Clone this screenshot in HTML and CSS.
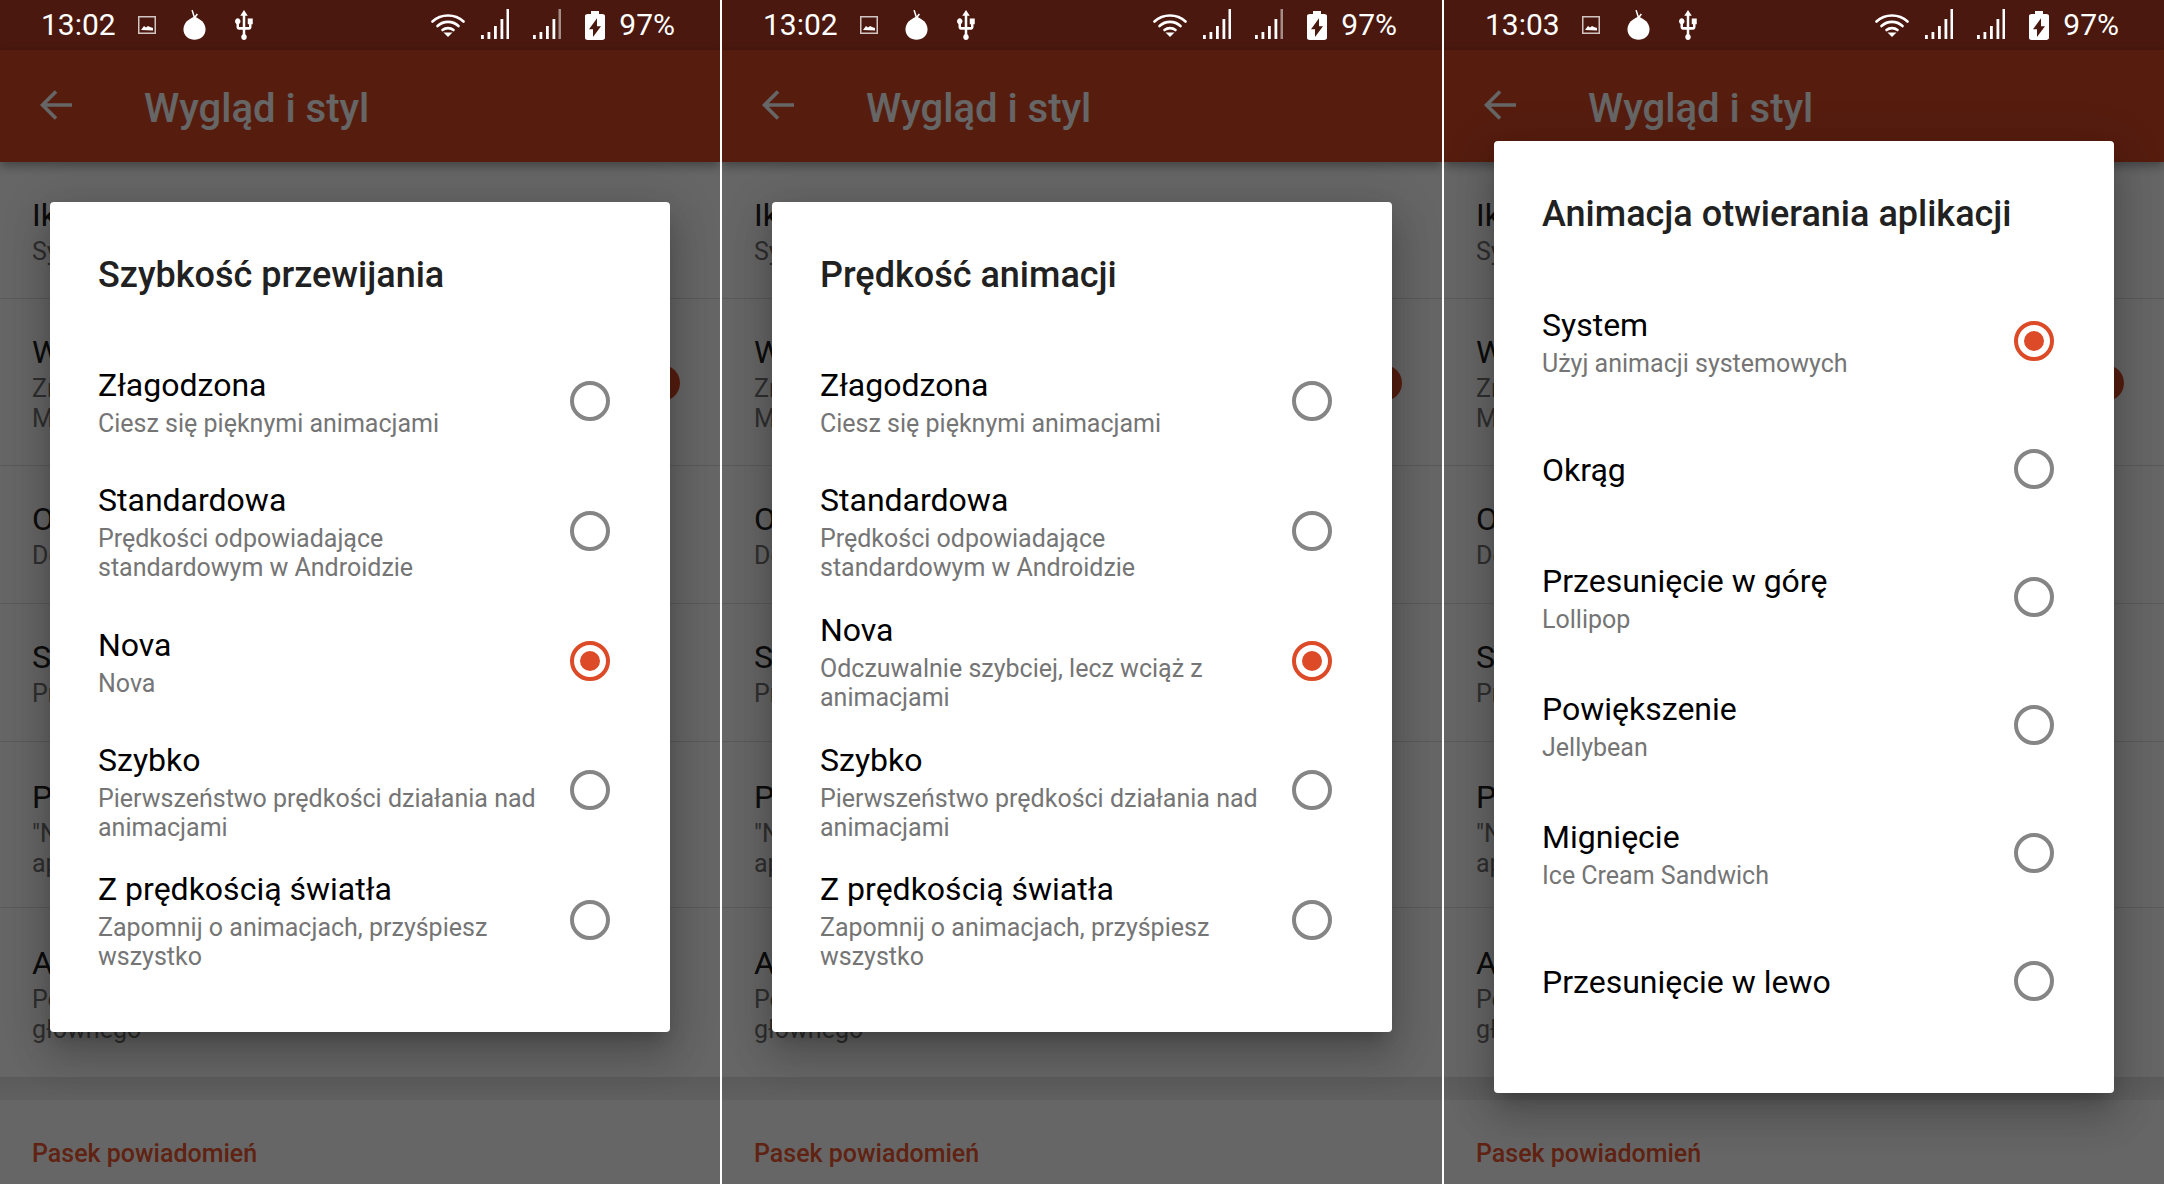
FILE: index.html
```html
<!DOCTYPE html>
<html lang="pl">
<head>
  <meta charset="UTF-8" />
  <title>Wygląd i styl</title>
  <link rel="stylesheet" href="styles.css">
</head>
<body>
  <svg class="defs" width="0" height="0">
    <symbol id="i-image" viewBox="0 0 18 18">
      <path d="M.75.75h16.5v16.5H.75z" fill="none" stroke="#fff" stroke-opacity=".75" stroke-width="1.5"/>
      <path d="M3 14l3-4 2 1.500 2-1.500 2 1 3 1v2.500z" fill="#fff"/>
    </symbol>
    <symbol id="i-bomb" viewBox="0 0 24 32">
      <path d="M12 8C6 10 .5 14.500 .5 21 .5 28 6 32 12 32s11.500-4 11.500-11C23.500 14.500 18 10 12 8z" fill="#fff"/>
      <path d="M12 9L9.500 1M12 9l3-4" fill="none" stroke="#fff" stroke-width="1.600"/>
    </symbol>
    <symbol id="i-usb" viewBox="4 1 16 21.200" preserveAspectRatio="none">
      <path fill="#fff" d="M15 7v4h1v2h-3V5h2l-3-4-3 4h2v8H8v-2.070c.7-.37 1.200-1.080 1.200-1.930 0-1.210-.99-2.200-2.200-2.200-1.210 0-2.200.99-2.200 2.200 0 .85.5 1.560 1.200 1.930V13c0 1.110.89 2 2 2h3v3.050c-.71.37-1.200 1.100-1.200 1.950 0 1.220.99 2.200 2.200 2.200 1.210 0 2.200-.98 2.200-2.200 0-.85-.49-1.580-1.200-1.950V15h3c1.110 0 2-.89 2-2v-2h1V7h-4z"/>
    </symbol>
    <symbol id="i-wifi" viewBox="0 0 34 24">
      <g fill="none" stroke="#fff" stroke-width="2.600" stroke-linecap="round">
        <path d="M1.500 8.500C10 .500 24 .500 32.500 8.500"/>
        <path d="M6.500 13C12.500 7.500 21.500 7.500 27.500 13"/>
        <path d="M11.500 17C14.500 14.500 19.500 14.500 22.500 17"/>
      </g>
      <path d="M12.500 19.500h9L17 24z" fill="#fff"/>
    </symbol>
    <symbol id="i-signal" viewBox="0 0 28 30">
      <path fill="#fff" d="M0 26h2.800v4H0zM6.500 23h2.800v7H6.500zM13 17h2.800v13H13zM19.500 10h2.800v20h-2.800z"/>
      <path fill="#fff" d="M25.500 0h2.500v30h-2.500z"/>
    </symbol>
    <symbol id="i-signal-dim" viewBox="0 0 28 30">
      <path fill="#fff" d="M0 26h2.800v4H0zM6.500 23h2.800v7H6.500zM13 17h2.800v13H13zM19.500 10h2.800v20h-2.800z"/>
      <path fill="#fff" fill-opacity=".5" d="M25.500 0h2.500v30h-2.500z"/>
    </symbol>
    <symbol id="i-battery" viewBox="7 2 10 20" preserveAspectRatio="none">
      <path fill="#fff" d="M15.670 4H14V2h-4v2H8.330C7.600 4 7 4.600 7 5.330v15.330C7 21.400 7.600 22 8.330 22h7.330c.74 0 1.340-.6 1.340-1.330V5.330C17 4.600 16.400 4 15.670 4zM11 20v-5.500H9L13 7v5.500h2L11 20z"/>
    </symbol>
    <symbol id="i-back" viewBox="0 0 32 30">
      <path d="M32 15H3M16 1.500L2.500 15 16 28.500" fill="none" stroke="#fff" stroke-width="3.600"/>
    </symbol>
  </svg>

  <div class="screens">

    <!-- scroll speed -->
    <section class="screen">
      <div class="statusbar">
        <span class="clock">13:02</span>
        <svg class="ic ic-image"><use href="#i-image"/></svg>
        <svg class="ic ic-bomb"><use href="#i-bomb"/></svg>
        <svg class="ic ic-usb"><use href="#i-usb"/></svg>
        <svg class="ic ic-wifi"><use href="#i-wifi"/></svg>
        <svg class="ic ic-signal"><use href="#i-signal"/></svg>
        <svg class="ic ic-signal ic-signal-2"><use href="#i-signal-dim"/></svg>
        <svg class="ic ic-battery"><use href="#i-battery"/></svg>
        <span class="percent">97%</span>
      </div>
      <div class="content">
        <header class="appbar">
          <svg class="back"><use href="#i-back"/></svg>
          <h1>Wygląd i styl</h1>
        </header>
        <ul class="prefs">
          <li><b>Ikony</b><span>System</span></li>
          <li><b>Wyłącz efekty</b><span>Zmień wygląd<br>Menu aplikacji</span><i class="thumb"></i></li>
          <li><b>Orientacja</b><span>Domyślna</span></li>
          <li><b>Szybkość przewijania</b><span>Prędkość</span></li>
          <li><b>Pokaż</b><span>"Nova"<br>aplikacji</span></li>
          <li><b>Animacja</b><span>Pokaż<br>głównego</span></li>
        </ul>
        <div class="band"></div>
        <h2 class="group">Pasek powiadomień</h2>
        <div class="scrim">
          <div class="dialog">
            <h3>Szybkość przewijania</h3>
            <div class="opt"><div class="opt-text"><p>Złagodzona</p><small>Ciesz się pięknymi animacjami</small></div><span class="radio"></span></div>
            <div class="opt"><div class="opt-text"><p>Standardowa</p><small>Prędkości odpowiadające standardowym w Androidzie</small></div><span class="radio"></span></div>
            <div class="opt"><div class="opt-text"><p>Nova</p><small>Nova</small></div><span class="radio on"></span></div>
            <div class="opt"><div class="opt-text"><p>Szybko</p><small>Pierwszeństwo prędkości działania nad animacjami</small></div><span class="radio"></span></div>
            <div class="opt"><div class="opt-text"><p>Z prędkością światła</p><small>Zapomnij o animacjach, przyśpiesz wszystko</small></div><span class="radio"></span></div>
          </div>
        </div>
      </div>
    </section>

    <!-- animation speed -->
    <section class="screen">
      <div class="statusbar">
        <span class="clock">13:02</span>
        <svg class="ic ic-image"><use href="#i-image"/></svg>
        <svg class="ic ic-bomb"><use href="#i-bomb"/></svg>
        <svg class="ic ic-usb"><use href="#i-usb"/></svg>
        <svg class="ic ic-wifi"><use href="#i-wifi"/></svg>
        <svg class="ic ic-signal"><use href="#i-signal"/></svg>
        <svg class="ic ic-signal ic-signal-2"><use href="#i-signal-dim"/></svg>
        <svg class="ic ic-battery"><use href="#i-battery"/></svg>
        <span class="percent">97%</span>
      </div>
      <div class="content">
        <header class="appbar">
          <svg class="back"><use href="#i-back"/></svg>
          <h1>Wygląd i styl</h1>
        </header>
        <ul class="prefs">
          <li><b>Ikony</b><span>System</span></li>
          <li><b>Wyłącz efekty</b><span>Zmień wygląd<br>Menu aplikacji</span><i class="thumb"></i></li>
          <li><b>Orientacja</b><span>Domyślna</span></li>
          <li><b>Szybkość przewijania</b><span>Prędkość</span></li>
          <li><b>Pokaż</b><span>"Nova"<br>aplikacji</span></li>
          <li><b>Animacja</b><span>Pokaż<br>głównego</span></li>
        </ul>
        <div class="band"></div>
        <h2 class="group">Pasek powiadomień</h2>
        <div class="scrim">
          <div class="dialog">
            <h3>Prędkość animacji</h3>
            <div class="opt"><div class="opt-text"><p>Złagodzona</p><small>Ciesz się pięknymi animacjami</small></div><span class="radio"></span></div>
            <div class="opt"><div class="opt-text"><p>Standardowa</p><small>Prędkości odpowiadające standardowym w Androidzie</small></div><span class="radio"></span></div>
            <div class="opt"><div class="opt-text"><p>Nova</p><small>Odczuwalnie szybciej, lecz wciąż z animacjami</small></div><span class="radio on"></span></div>
            <div class="opt"><div class="opt-text"><p>Szybko</p><small>Pierwszeństwo prędkości działania nad animacjami</small></div><span class="radio"></span></div>
            <div class="opt"><div class="opt-text"><p>Z prędkością światła</p><small>Zapomnij o animacjach, przyśpiesz wszystko</small></div><span class="radio"></span></div>
          </div>
        </div>
      </div>
    </section>

    <!-- app open animation -->
    <section class="screen">
      <div class="statusbar">
        <span class="clock">13:03</span>
        <svg class="ic ic-image"><use href="#i-image"/></svg>
        <svg class="ic ic-bomb"><use href="#i-bomb"/></svg>
        <svg class="ic ic-usb"><use href="#i-usb"/></svg>
        <svg class="ic ic-wifi"><use href="#i-wifi"/></svg>
        <svg class="ic ic-signal"><use href="#i-signal"/></svg>
        <svg class="ic ic-signal ic-signal-2"><use href="#i-signal"/></svg>
        <svg class="ic ic-battery"><use href="#i-battery"/></svg>
        <span class="percent">97%</span>
      </div>
      <div class="content">
        <header class="appbar">
          <svg class="back"><use href="#i-back"/></svg>
          <h1>Wygląd i styl</h1>
        </header>
        <ul class="prefs">
          <li><b>Ikony</b><span>System</span></li>
          <li><b>Wyłącz efekty</b><span>Zmień wygląd<br>Menu aplikacji</span><i class="thumb"></i></li>
          <li><b>Orientacja</b><span>Domyślna</span></li>
          <li><b>Szybkość przewijania</b><span>Prędkość</span></li>
          <li><b>Pokaż</b><span>"Nova"<br>aplikacji</span></li>
          <li><b>Animacja</b><span>Pokaż<br>głównego</span></li>
        </ul>
        <div class="band"></div>
        <h2 class="group">Pasek powiadomień</h2>
        <div class="scrim">
          <div class="dialog dialog-tall">
            <h3>Animacja otwierania aplikacji</h3>
            <div class="opt"><div class="opt-text"><p>System</p><small>Użyj animacji systemowych</small></div><span class="radio on"></span></div>
            <div class="opt"><div class="opt-text"><p>Okrąg</p></div><span class="radio"></span></div>
            <div class="opt"><div class="opt-text"><p>Przesunięcie w górę</p><small>Lollipop</small></div><span class="radio"></span></div>
            <div class="opt"><div class="opt-text"><p>Powiększenie</p><small>Jellybean</small></div><span class="radio"></span></div>
            <div class="opt"><div class="opt-text"><p>Mignięcie</p><small>Ice Cream Sandwich</small></div><span class="radio"></span></div>
            <div class="opt"><div class="opt-text"><p>Przesunięcie w lewo</p></div><span class="radio"></span></div>
          </div>
        </div>
      </div>
    </section>

  </div>
</body>
</html>
```

FILE: styles.css
```css
* {
  box-sizing: border-box;
}

html, body {
  margin: 0;
  height: 100%;
  background: #fff;
  overflow: hidden;
}

body {
  font-family: Roboto, sans-serif;
}

.defs {
  position: absolute;
}

.screens {
  display: flex;
  gap: 2px;
  height: 1184px;
}

.screen {
  width: 720px;
  height: 1184px;
  display: flex;
  flex-direction: column;
  overflow: hidden;
}

/* status bar sits above the scrim */
.statusbar {
  flex: none;
  height: 50px;
  background: #4a180f;
  color: #fff;
  display: flex;
  align-items: center;
  padding: 0 45px 0 41px;
  font-size: 30px;
}

.clock, .percent {
  line-height: 50px;
}

.ic {
  display: block;
  flex: none;
}

.ic-image { width: 18px; height: 18px; margin: 0 0 0 22px; }
.ic-bomb { width: 23px; height: 31px; margin: -1px 0 0 27px; }
.ic-usb { width: 20px; height: 30px; margin: 0 0 0 28px; }
.ic-wifi { width: 34px; height: 24px; margin: 0 0 0 auto; }
.ic-signal { width: 28px; height: 30px; margin: -3px 0 0 16px; }
.ic-signal-2 { margin-left: 24px; }
.ic-battery { width: 20px; height: 29px; margin: 0 0 0 24px; }
.percent { margin-left: 14px; }

.content {
  position: relative;
  flex: 1;
  min-height: 0;
  background: #fff;
}

.appbar {
  height: 112px;
  background: #d84a27;
  box-shadow: 0 4px 10px rgba(0, 0, 0, 0.35);
  display: flex;
  align-items: center;
  position: relative;
}

.back {
  width: 32px;
  height: 30px;
  margin: -3px 0 0 40px;
}

.appbar h1 {
  margin: 4px 0 0 72px;
  font-size: 40px;
  font-weight: 500;
  color: #fff;
}

.prefs {
  list-style: none;
  margin: 0;
  padding: 0;
}

.prefs li {
  position: relative;
  padding: 34px 32px 31px;
  border-bottom: 1px solid #e0e0e0;
}

.prefs li:nth-child(3),
.prefs li:nth-child(4) {
  padding-bottom: 32px;
}

.prefs li:nth-child(5) {
  padding-top: 36px;
  padding-bottom: 28px;
}

.prefs li:last-child {
  padding-top: 36px;
  padding-bottom: 32px;
  border-bottom: 0;
}

.prefs b {
  display: block;
  font-weight: 400;
  font-size: 32px;
  line-height: 38px;
  color: #212121;
}

.prefs span {
  display: block;
  margin-top: 3px;
  font-size: 25px;
  line-height: 30px;
  color: #757575;
}

.thumb {
  position: absolute;
  right: 40px;
  top: 66px;
  width: 36px;
  height: 36px;
  border-radius: 50%;
  background: #d84a27;
}

.band {
  height: 23px;
  background: linear-gradient(#e4e4e4, #efefef);
}

.group {
  margin: 0;
  padding: 36px 32px;
  font-size: 25px;
  line-height: 36px;
  font-weight: 500;
  color: #f0562e;
}

.scrim {
  position: absolute;
  inset: 0;
  background: rgba(0, 0, 0, 0.6);
  display: flex;
  align-items: center;
  justify-content: center;
}

.dialog {
  width: 620px;
  padding-bottom: 48px;
  background: #fff;
  border-radius: 4px;
  box-shadow: 0 24px 38px 3px rgba(0, 0, 0, 0.14), 0 9px 46px 8px rgba(0, 0, 0, 0.12), 0 11px 15px -7px rgba(0, 0, 0, 0.2);
}

.dialog h3 {
  margin: 0;
  padding: 52px 48px 0;
  height: 135px;
  font-size: 36px;
  line-height: 42px;
  font-weight: 500;
  color: #212121;
}

.dialog-tall h3 {
  height: 136px;
}

.opt {
  display: flex;
  align-items: center;
  height: 129.6px;
  padding: 0 60px 0 48px;
}

.dialog-tall .opt {
  height: 128px;
}

.opt-text {
  flex: 1;
  padding: 2px 30px 0 0;
}

.opt-text p {
  margin: 0;
  font-size: 32px;
  line-height: 38px;
  color: #000;
}

.opt-text small {
  display: block;
  font-size: 25px;
  line-height: 29px;
  margin-top: 5px;
  color: #757575;
}

.radio {
  flex: none;
  position: relative;
  width: 40px;
  height: 40px;
  border: 4px solid #858585;
  border-radius: 50%;
}

.radio.on {
  border-color: #dc4a27;
}

.radio.on::after {
  content: "";
  position: absolute;
  inset: 6px;
  border-radius: 50%;
  background: #dc4a27;
}
```
